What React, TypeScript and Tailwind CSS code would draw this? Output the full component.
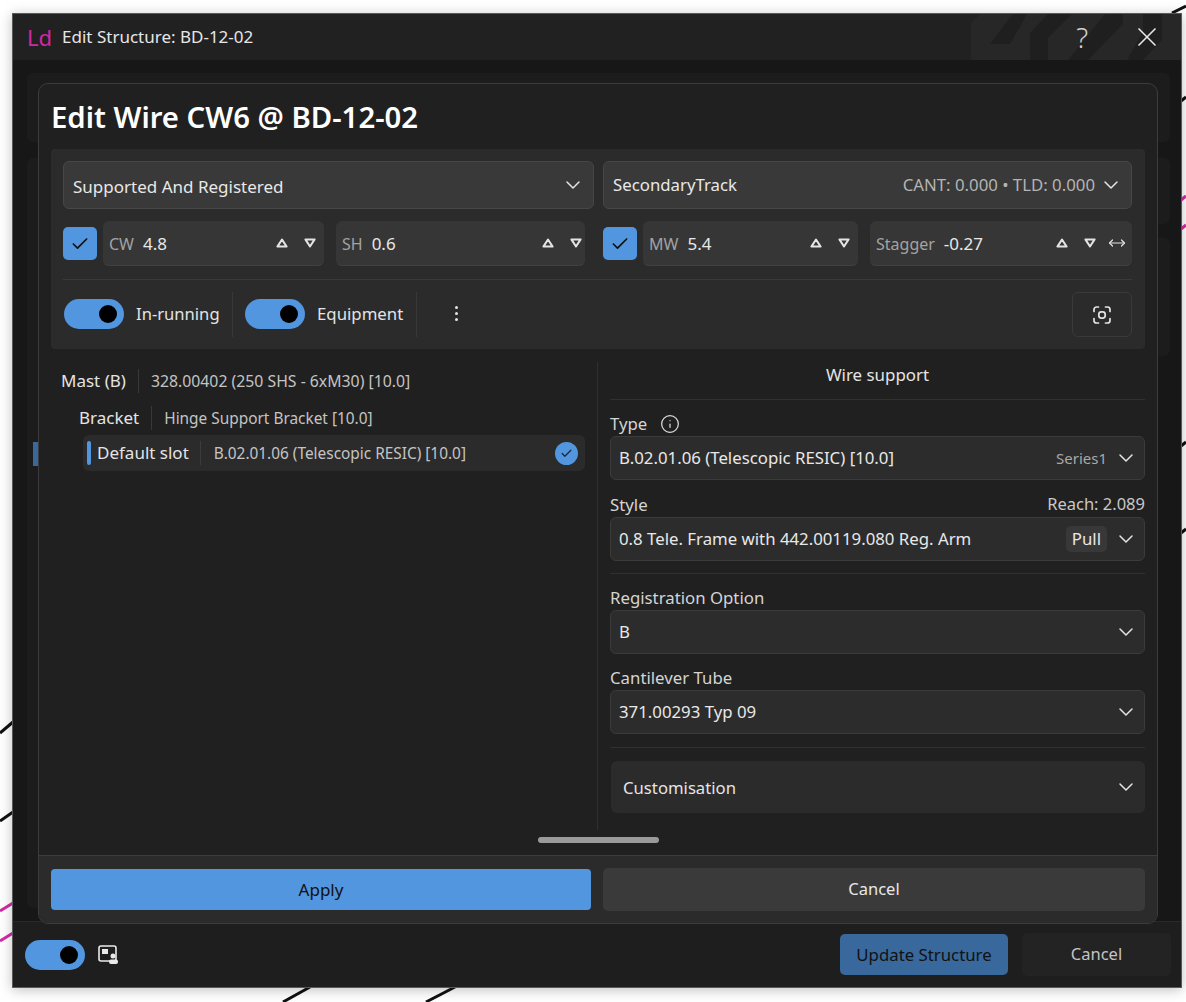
import React from 'react';
import { Check, ChevronDown, Info, MoveHorizontal } from 'lucide-react';

const Chevron = () => <ChevronDown className="w-[24px] h-[24px] text-[#e4e4e4]" strokeWidth={1.5} />;

const TriUp = () => (
  <svg width="12" height="10" viewBox="0 0 12 10" fill="none">
    <path d="M6 1.5 L10.6 8.6 H1.4 Z" stroke="#e4e4e4" strokeWidth="2" strokeLinejoin="round" />
  </svg>
);

const TriDown = () => (
  <svg width="12" height="10" viewBox="0 0 12 10" fill="none">
    <path d="M6 8.5 L10.6 1.4 H1.4 Z" stroke="#e4e4e4" strokeWidth="2" strokeLinejoin="round" />
  </svg>
);

const Toggle = () => (
  <div className="w-[60px] h-[30px] rounded-full bg-[#5296e0] flex items-center justify-end pr-[7px] shrink-0">
    <div className="w-[18px] h-[18px] rounded-full bg-black" />
  </div>
);

const CheckBox = () => (
  <div className="w-[34px] h-[33px] rounded-[5px] bg-[#5296e0] flex items-center justify-center shrink-0">
    <Check className="w-[20px] h-[20px] text-[#111]" strokeWidth={2} />
  </div>
);

interface NumFieldProps {
  label: string;
  value: string;
  className: string;
  iconPad: string;
  arrows?: boolean;
}

const NumField: React.FC<NumFieldProps> = ({ label, value, className, iconPad, arrows }) => (
  <div className={`h-[45px] rounded-[6px] bg-[#363636] border-b border-[#414141] flex items-center pl-[6px] ${className}`}>
    <span className="text-[16px] text-[#a3a3a3] mr-[9px] pt-[2px]">{label}</span>
    <span className="text-[17px] text-[#e8e8e8] pt-[2px]">{value}</span>
    <div className={`ml-auto flex items-center gap-[16px] ${iconPad}`}>
      <TriUp />
      <TriDown />
      {arrows && <MoveHorizontal className="w-[18px] h-[18px] text-[#e4e4e4] -ml-[4px]" strokeWidth={1.6} />}
    </div>
  </div>
);

const Select: React.FC<{ children: React.ReactNode }> = ({ children }) => (
  <div className="h-[44px] rounded-[6px] bg-[#2c2c2c] border border-[#3b3b3b] flex items-center pl-[8px] pr-[6px] text-[16.8px] text-[#e8e8e8]">
    {children}
  </div>
);

const FieldLabel: React.FC<{ children: React.ReactNode }> = ({ children }) => (
  <div className="h-[25px] flex items-center justify-between text-[16.8px] text-[#d4d4d4]">{children}</div>
);

const TreeRow: React.FC<{ name: string; value: string; className: string; valueSize: string }> = ({ name, value, className, valueSize }) => (
  <div className={`flex items-center h-[24px] ${className}`}>
    <span className="text-[17px] text-[#e4e4e4] pr-[12px] border-r border-[#383838] leading-[24px]">{name}</span>
    <span className={`text-[#c4c4c4] pl-[12px] pt-[1px] ${valueSize}`}>{value}</span>
  </div>
);

export default function App() {
  return (
    <div className="relative h-[1002px] w-[1186px] overflow-hidden bg-white pt-[13px] pl-[12px] font-['Noto_Sans',sans-serif]">
      {/* map lines showing behind the window */}
      <svg className="absolute inset-0" width="1186" height="1002" fill="none" strokeWidth="3">
        <g stroke="#111">
          <path d="M0 733 L13 722" />
          <path d="M0 821 L13 812" />
          <path d="M283 1002 L310 987" />
          <path d="M426 1002 L455 987" />
          <path d="M1172 13 L1186 6" />
          <path d="M1181 101 L1186 97" />
          <path d="M1181 446 L1186 442" />
          <path d="M1181 533 L1186 529" />
        </g>
        <g stroke="#d42aa8">
          <path d="M0 911 L13 903" />
          <path d="M0 941 L13 933" />
          <path d="M1181 200 L1186 196" />
          <path d="M1181 229 L1186 225" />
        </g>
      </svg>

      {/* window */}
      <div className="relative w-[1170px] h-[975px] flex flex-col bg-[#171717] border border-[#5a5a5a] shadow-[0_2px_12px_rgba(0,0,0,0.25)]">
        <div className="relative h-[46px] bg-[#212121] flex items-center shrink-0 overflow-hidden">
          <svg className="absolute top-0 left-[958px]" width="210" height="46" viewBox="958 0 210 46">
            <path d="M958 46 V9 L967 0 H1168 V46 Z" fill="#272727" />
            <g fill="#1f1f1f">
              <path d="M977 30 H997 L1014 0 H1000 Z" />
              <path d="M1017 46 H1035 V24 L1059 0 H1035 L1017 19 Z" />
              <path d="M1055 46 H1075 L1110 10 V0 H1092 Z" />
              <path d="M1114 46 H1130 L1149 26 V0 H1130 V18 Z" />
            </g>
          </svg>
          <span className="relative ml-[14px] text-[22px] text-[#d426a6] leading-none">Ld</span>
          <span className="relative ml-[10px] text-[17px] text-[#e6e6e6]">Edit Structure: BD-12-02</span>
          <span className="relative ml-auto text-[28px] font-light text-[#cfcfcf] leading-none mr-[49px]">?</span>
          <svg className="relative mr-[24px]" width="20" height="20" viewBox="0 0 20 20" fill="none" stroke="#e8e8e8" strokeWidth="1.6">
            <path d="M1.5 1.5 L18.5 18.5" />
            <path d="M18.5 1.5 L1.5 18.5" />
          </svg>
        </div>

        {/* dimmed page content under the modal */}
        <div className="flex-1 min-h-0 pt-[13px] pl-[14px] pr-[11px] flex flex-col gap-[16px]">
          <div className="h-[69px] rounded-[6px] bg-[#1c1c1c] shrink-0" />
          <div className="flex gap-[10px]">
            <div className="relative w-[500px] h-[750px] rounded-[6px] bg-[#1c1c1c]">
              <div className="absolute left-[6px] top-[284px] w-[5px] h-[24px] bg-[#38689c]" />
            </div>
            <div className="flex-1 flex flex-col gap-[14px]">
              <div className="h-[66px] rounded-[6px] bg-[#1c1c1c]" />
              <div className="h-[118px] rounded-[6px] bg-[#1c1c1c]" />
            </div>
          </div>
        </div>

        <div className="h-[66px] bg-[#1e1e1e] border-t border-[#2a2a2a] shrink-0 flex items-center pl-[12px] pr-[10px]">
          <Toggle />
          <svg className="ml-[13px]" width="22" height="20" viewBox="0 0 22 20" fill="none">
            <rect x="1" y="1" width="17" height="15" rx="2" stroke="#eaeaea" strokeWidth="1.6" />
            <rect x="4" y="4" width="6" height="5" fill="#eaeaea" />
            <circle cx="15" cy="11" r="2.5" fill="#eaeaea" />
            <rect x="11" y="14.5" width="9" height="4.5" rx="2" fill="#eaeaea" />
          </svg>
          <button className="ml-auto w-[168px] h-[41px] rounded-[5px] bg-[#38689c] text-[16.8px] text-[#121212]">Update Structure</button>
          <button className="ml-[14px] w-[149px] h-[43px] rounded-[5px] bg-[#232323] text-[16.5px] text-[#c4c4c4]">Cancel</button>
        </div>

        {/* modal */}
        <div className="absolute left-[25px] top-[69px] w-[1120px] h-[841px] rounded-[10px] bg-[#202020] border border-[#3c3c3c] flex flex-col overflow-hidden">
          <div className="h-[65px] shrink-0 pl-[12px] pt-[13px] text-[29.3px] font-semibold text-white leading-[40px]">Edit Wire CW6 @ BD-12-02</div>

          <div className="ml-[12px] mr-[12px] h-[200px] rounded-[4px] bg-[#2b2b2b] shrink-0 pl-[12px] pr-[13px] pt-[12px]">
            <div className="flex gap-[9px]">
              <div className="w-[531px] h-[48px] rounded-[6px] bg-[#393939] border border-[#474747] flex items-center pl-[9px] pr-[8px] text-[17px] text-[#e8e8e8]">
                <span className="pt-[3px]">Supported And Registered</span>
                <span className="ml-auto"><Chevron /></span>
              </div>
              <div className="flex-1 h-[48px] rounded-[6px] bg-[#393939] border border-[#474747] flex items-center pl-[9px] pr-[8px] text-[16.8px] text-[#e8e8e8]">
                SecondaryTrack
                <span className="ml-auto text-[#b4b4b4] mr-[4px]">CANT: 0.000 • TLD: 0.000</span>
                <Chevron />
              </div>
            </div>

            <div className="flex items-center mt-[12px]">
              <CheckBox />
              <NumField label="CW" value="4.8" className="ml-[6px] w-[221px]" iconPad="pr-[8px]" />
              <NumField label="SH" value="0.6" className="ml-[12px] w-[249px]" iconPad="pr-[3px]" />
              <div className="ml-[18px]"><CheckBox /></div>
              <NumField label="MW" value="5.4" className="ml-[6px] w-[215px]" iconPad="pr-[8px]" />
              <NumField label="Stagger" value="-0.27" className="ml-[12px] w-[262px]" iconPad="pr-[6px]" arrows />
            </div>

            <div className="h-px bg-[#3a3a3a] mt-[13px]" />

            <div className="flex items-start h-[45px] mt-[12px] pl-[1px]">
              <div className="pt-[7px]"><Toggle /></div>
              <span className="ml-[12px] text-[16.6px] text-[#e4e4e4] w-[96px] leading-[44px]">In-running</span>
              <div className="w-px h-[45px] bg-[#383838]" />
              <div className="ml-[12px] pt-[7px]"><Toggle /></div>
              <span className="ml-[12px] text-[16.8px] text-[#e4e4e4] w-[99px] leading-[44px]">Equipment</span>
              <div className="w-px h-[45px] bg-[#383838]" />
              <div className="ml-[38px] pt-[14px] flex flex-col gap-[3px]">
                <div className="w-[3px] h-[3px] rounded-full bg-[#e4e4e4]" />
                <div className="w-[3px] h-[3px] rounded-full bg-[#e4e4e4]" />
                <div className="w-[3px] h-[3px] rounded-full bg-[#e4e4e4]" />
              </div>
              <div className="ml-auto w-[60px] h-[45px] rounded-[6px] border border-[#3a3a3a] flex items-center justify-center">
                <svg width="20" height="20" viewBox="0 0 20 20" fill="none" stroke="#e4e4e4" strokeWidth="1.7" strokeLinecap="round">
                  <path d="M2 6.5 V4.5 A2.5 2.5 0 0 1 4.5 2 H6.5" />
                  <path d="M13.5 2 H15.5 A2.5 2.5 0 0 1 18 4.5 V6.5" />
                  <path d="M18 13.5 V15.5 A2.5 2.5 0 0 1 15.5 18 H13.5" />
                  <path d="M6.5 18 H4.5 A2.5 2.5 0 0 1 2 15.5 V13.5" />
                  <rect x="6.8" y="6.8" width="6.4" height="6.4" rx="2.6" />
                </svg>
              </div>
            </div>
          </div>

          {/* tree and wire support */}
          <div className="flex-1 min-h-0 flex pt-[13px] pl-[13px]">
            <div className="w-[545px] shrink-0 pt-[7px] pr-[12px]">
              <TreeRow name="Mast (B)" value="328.00402 (250 SHS - 6xM30) [10.0]" className="pl-[9px]" valueSize="text-[15.8px]" />
              <TreeRow name="Bracket" value="Hinge Support Bracket [10.0]" className="pl-[27px] mt-[13px]" valueSize="text-[15.4px]" />
              <div className="relative ml-[31px] mt-[5px] h-[36px] rounded-[6px] bg-[#2b2b2b] flex items-center pl-[4px]">
                <div className="w-[4px] h-[24px] rounded-[2px] bg-[#5296e0] mr-[6px]" />
                <span className="text-[17px] text-[#e4e4e4] pr-[11px] border-r border-[#3c3c3c] leading-[24px]">Default slot</span>
                <span className="text-[15.4px] text-[#c4c4c4] pl-[13px] pt-[1px]">B.02.01.06 (Telescopic RESIC) [10.0]</span>
                <div className="ml-auto mr-[7px] w-[23px] h-[23px] rounded-full bg-[#5296e0] flex items-center justify-center">
                  <Check className="w-[13px] h-[13px] text-[#1a2a3c]" strokeWidth={2.4} />
                </div>
              </div>
            </div>

            <div className="w-px h-[468px] bg-[#2f2f2f] shrink-0" />

            <div className="w-[535px] ml-[12px] shrink-0">
              <div className="h-[38px] border-b border-[#303030] flex items-center justify-center pb-[12px] text-[16.9px] text-[#e4e4e4]">Wire support</div>
              <div className="mt-[11px]">
                <FieldLabel>
                  <span className="flex items-center gap-[13px]">Type <Info className="w-[20px] h-[20px] text-[#dcdcdc]" strokeWidth={1.5} /></span>
                </FieldLabel>
                <Select>
                  <span>B.02.01.06 (Telescopic RESIC) [10.0]</span>
                  <span className="ml-auto text-[15px] text-[#a8a8a8] mr-[7px]">Series1</span>
                  <Chevron />
                </Select>
              </div>
              <div className="mt-[12px]">
                <FieldLabel>
                  <span>Style</span>
                  <span className="text-[16.5px] text-[#c8c8c8]">Reach: 2.089</span>
                </FieldLabel>
                <Select>
                  <span>0.8 Tele. Frame with 442.00119.080 Reg. Arm</span>
                  <span className="ml-auto mr-[7px] px-[6px] h-[26px] rounded-[5px] bg-[#383838] leading-[26px]">Pull</span>
                  <Chevron />
                </Select>
              </div>
              <div className="h-px bg-[#303030] mt-[12px]" />
              <div className="mt-[11px]">
                <FieldLabel>Registration Option</FieldLabel>
                <Select>
                  <span>B</span>
                  <span className="ml-auto"><Chevron /></span>
                </Select>
              </div>
              <div className="mt-[11px]">
                <FieldLabel>Cantilever Tube</FieldLabel>
                <Select>
                  <span>371.00293 Typ 09</span>
                  <span className="ml-auto"><Chevron /></span>
                </Select>
              </div>
              <div className="h-px bg-[#303030] mt-[13px]" />
              <div className="ml-[1px] mt-[13px] h-[52px] rounded-[6px] bg-[#2b2b2b] flex items-center pl-[12px] pr-[7px] text-[16.7px] text-[#e4e4e4]">
                <span className="pt-[1px]">Customisation</span>
                <span className="ml-auto"><Chevron /></span>
              </div>
            </div>
          </div>

          <div className="h-[24px] shrink-0 flex justify-center items-start pt-[6px]">
            <div className="w-[121px] h-[6px] rounded-full bg-[#9a9a9a]" />
          </div>

          <div className="h-[68px] shrink-0 bg-[#2b2b2b] border-t border-[#3c3c3c] flex gap-[12px] px-[12px] pt-[13px]">
            <button className="w-[540px] h-[41px] rounded-[4px] bg-[#5296e0] text-[17px] text-[#111]">Apply</button>
            <button className="w-[542px] h-[43px] -mt-px rounded-[5px] bg-[#3a3a3a] text-[16.5px] text-[#e8e8e8]">Cancel</button>
          </div>
        </div>
      </div>
    </div>
  );
}
